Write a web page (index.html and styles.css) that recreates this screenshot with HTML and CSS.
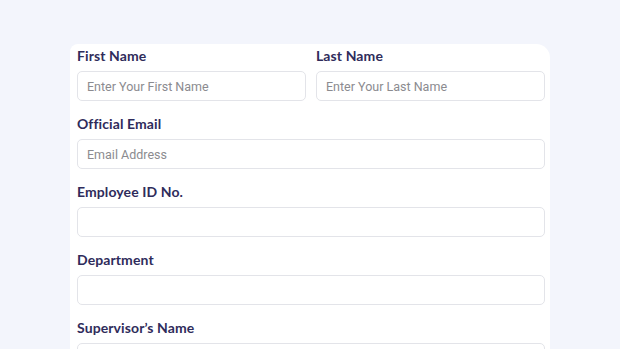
FILE: index.html
```html
<!DOCTYPE html>
<html>
<head>
<meta charset="utf-8">
<link rel="stylesheet" href="styles.css">
</head>
<body>
<div class="page">
  <form class="card">
    <div class="row two">
      <div class="field">
        <label class="label">First Name</label>
        <div class="input"><span class="ph">Enter Your First Name</span></div>
      </div>
      <div class="field">
        <label class="label">Last Name</label>
        <div class="input"><span class="ph">Enter Your Last Name</span></div>
      </div>
    </div>
    <div class="field">
      <label class="label">Official Email</label>
      <div class="input"><span class="ph">Email Address</span></div>
    </div>
    <div class="field">
      <label class="label">Employee ID No.</label>
      <div class="input"></div>
    </div>
    <div class="field">
      <label class="label">Department</label>
      <div class="input"></div>
    </div>
    <div class="field">
      <label class="label">Supervisor’s Name</label>
      <div class="input"></div>
    </div>
  </form>
</div>
</body>
</html>
```
FILE: styles.css
```css
* { box-sizing: border-box; }
html, body { margin: 0; padding: 0; }
body {
  width: 620px;
  height: 349px;
  overflow: hidden;
  background: #f3f5fc;
  font-family: "Lato", sans-serif;
}
.page {
  height: 349px;
  overflow: hidden;
  padding: 44px 0 0 70px;
}
.card {
  width: 480px;
  height: 320px;
  background: #ffffff;
  border-radius: 8px 14px 0 0;
  padding: 2px 5px 0 7px;
  display: flex;
  flex-direction: column;
  gap: 13px;
}
.row.two {
  display: grid;
  grid-template-columns: 1fr 1fr;
  column-gap: 10px;
}
.field {
  display: flex;
  flex-direction: column;
  gap: 5px;
}
.label {
  font-family: "Lato", sans-serif;
  font-weight: 700;
  font-size: 14px;
  line-height: 20px;
  color: #2f2c5b;
  letter-spacing: 0.1px;
}
.input {
  height: 30px;
  border: 1px solid #e3e4e9;
  border-radius: 5px;
  background: #fff;
  display: flex;
  align-items: center;
  padding-left: 9px;
}
.ph {
  font-family: "Roboto", sans-serif;
  font-size: 12.5px;
  font-weight: 400;
  color: #8b8b8f;
}
```
